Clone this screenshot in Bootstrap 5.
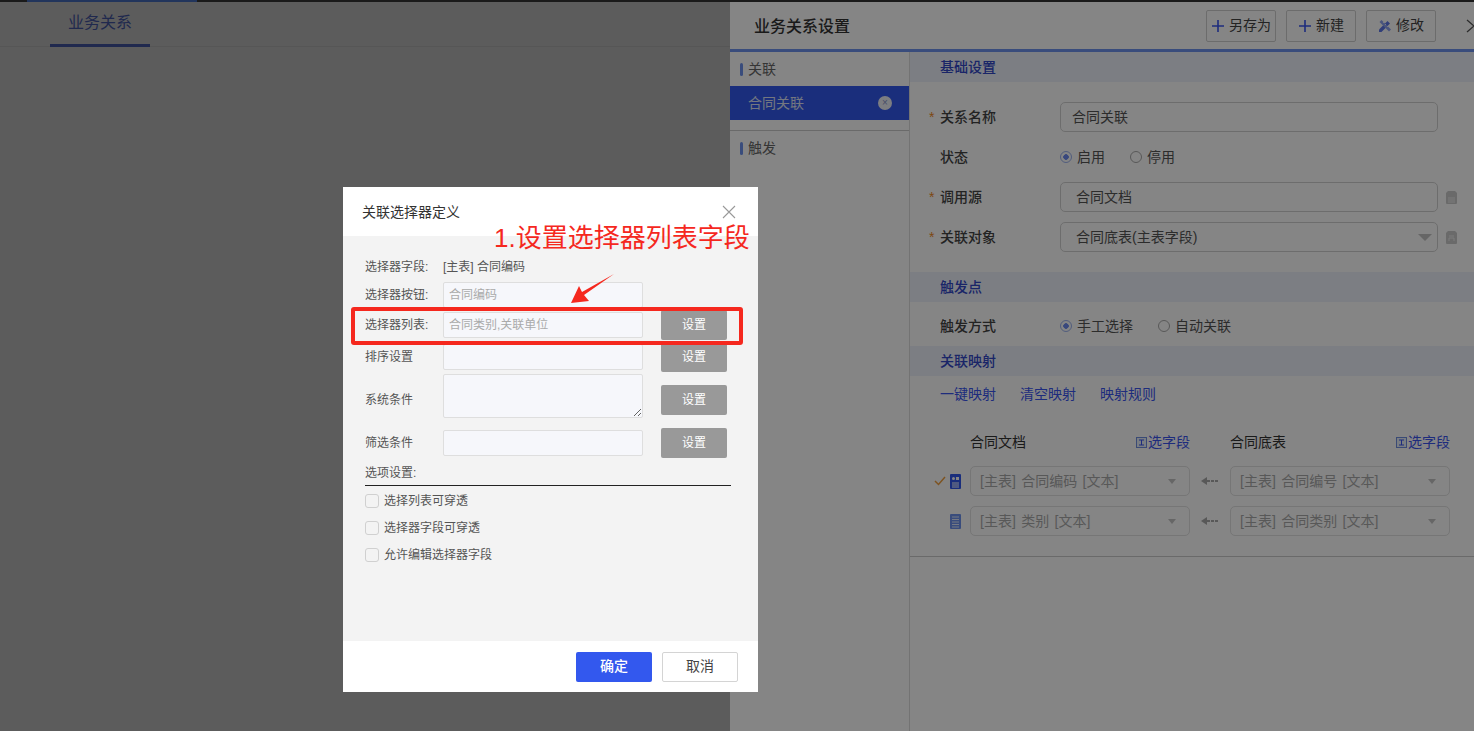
<!DOCTYPE html>
<html lang="zh-CN">
<head>
    <meta charset="UTF-8">
    <meta name="viewport" content="width=device-width, initial-scale=1.0">
    <title>业务关系设置</title>
    <link href="https://cdn.jsdelivr.net/npm/bootstrap@5.3.0/dist/css/bootstrap.min.css" rel="stylesheet">
    <style>
        html, body { height: 731px; overflow: hidden; }
        body { font-family: "Liberation Sans", "Noto Sans CJK SC", sans-serif; font-size: 14px; color: #333; background: #fff; }
        .page-wrap { display: flex; height: 731px; position: relative; }

        /* left */
        .left-side { width: 730px; flex: none; }
        .top-strip { height: 2px; background: #484848; }
        .top-strip span { display: block; margin-left: 27px; width: 170px; height: 2px; background: #5e93ff; }
        .biz-tabs { height: 45px; border-bottom: 1px solid #eee; padding-left: 50px; }
        .biz-tab { display: block; width: 100px; height: 45px; border-bottom: 3px solid #5a72d8; text-align: center; font-size: 16px; line-height: 42px; color: #5a72d8; }

        /* right panel */
        .right-side { width: 744px; flex: none; }
        .strip-right { height: 2px; background: #323232; }
        .panel-top { height: 47px; padding-left: 24px; }
        .panel-title { font-size: 16px; font-weight: 500; color: #333; padding-top: 3px; }
        .tool-btn { width: 70px; height: 32px; padding: 0; margin-right: 10px; font-size: 14px; color: #444; border: 1px solid #d0d0d0; border-radius: 2px; background: #fff; }
        .close-x { width: 18px; margin-left: 20px; }
        .panel-body { display: flex; border-top: 3px solid #6d93ee; height: 682px; }
        .side-list { width: 180px; flex: none; border-right: 1px solid #ddd; }
        .side-head { height: 34px; padding-left: 10px; color: #666; }
        .side-head i { display: block; width: 3px; height: 13px; margin-right: 5px; background: #6d93ee; border-radius: 2px; }
        .side-active { height: 34px; padding: 0 17px 0 18px; background: #3358ee; color: #dfe4f5; }
        .side-close { width: 14px; height: 14px; border-radius: 50%; background: #eef0f8; color: #8a95c8; font-size: 10px; line-height: 13px; text-align: center; }
        .side-line { border-top: 1px solid #ccc; margin-top: 10px; }

        .main-form { flex: 1; }
        .sec-head { height: 30px; line-height: 30px; padding-left: 30px; background: #edf2fb; color: #3348c8; font-weight: 500; }
        .form-line { display: flex; align-items: center; height: 30px; padding-left: 19px; font-weight: 500; }
        .star { width: 11px; color: #f08a24; }
        .form-name { width: 120px; color: #444; }
        .plain-box { height: 30px; padding: 0 11px; line-height: 28px; color: #555; border: 1px solid #d2d2d2; border-radius: 5px; background: #fff; font-weight: 400; }
        .w-long { width: 378px; }
        .pad-more { padding-left: 15px; padding-right: 5px; }
        .side-doc { margin-left: 8px; }
        .radio-item { display: flex; align-items: center; margin-right: 25px; font-weight: 400; color: #555; }
        .radio-item .form-check-input { width: 12px; height: 12px; margin: 0 5px 0 0; border: 1px solid #aaa; background: #fff; }
        .radio-item .form-check-input:checked { border-color: #9db3f0; background-color: #fff; background-image: radial-gradient(circle, #6d8bf0 0 2.5px, transparent 3px); }
        .tri { width: 0; height: 0; border-left: 4px solid transparent; border-right: 4px solid transparent; border-top: 5px solid #c4c4c4; }
        .tri-big { border-left-width: 7px; border-right-width: 7px; border-top-width: 7px; }
        .map-links { padding-left: 30px; line-height: 20px; }
        .map-links a { color: #3a55f0; text-decoration: none; margin-right: 24px; }
        .map-head { display: flex; height: 20px; line-height: 20px; padding-left: 60px; }
        .map-col { width: 220px; display: flex; justify-content: space-between; }
        .map-col a { color: #3a55f0; text-decoration: none; display: flex; align-items: center; gap: 1px; }
        .map-gap { width: 40px; display: flex; align-items: center; justify-content: center; }
        .map-row { display: flex; height: 30px; padding-left: 24px; align-items: center; }
        .map-check { width: 14px; }
        .map-doc { width: 15px; margin-right: 7px; }
        .doc-strong { color: #3358ee; }
        .doc-light { color: #6d93ee; }
        .map-select { width: 220px; height: 30px; padding: 0 13px 0 9px; border: 1px solid #e2e2e2; border-radius: 5px; color: #aaa; background: #fff; word-spacing: 1.5px; }
        .map-end { border-top: 1px solid #ccc; margin-top: 20px; }
        .first-line { margin-top: 20px; }
        .gap-line { margin-top: 10px; }
        .sec-two { margin-top: 20px; }
        .trig-line { margin-top: 9px; }
        .sec-three { margin-top: 5px; }
        .links-gap { margin-top: 8px; }
        .head-gap { margin-top: 28px; }
        .row-one { margin-top: 14px; }
        .row-two { margin-top: 10px; }

        /* masks */
        .mask-left, .mask-right { position: absolute; top: 0; height: 731px; }
        .mask-left { left: 0; width: 730px; background: rgba(0, 0, 0, .64); }
        .mask-right { left: 730px; width: 744px; background: rgba(0, 0, 0, .48); }

        /* dialog */
        .sel-dialog { position: absolute; left: 343px; top: 187px; width: 415px; height: 505px; background: #f3f3f3; display: flex; flex-direction: column; }
        .dlg-top { height: 49px; padding: 0 22px 0 19px; background: #fff; }
        .dlg-title { color: #333; font-size: 14px; padding-top: 1px; }
        .dlg-body { flex: 1; padding: 0 27px 0 22px; font-size: 12px; color: #555; }
        .dlg-line { display: flex; align-items: center; }
        .dlg-name { width: 78px; flex: none; }
        .dlg-input { width: 200px; height: 26px; flex: none; padding: 0 5px; line-height: 24px; font-size: 12px; color: #aaa; background: #f6f7fb; border: 1px solid #dedede; border-radius: 2px; }
        .dlg-area { width: 200px; height: 44px; flex: none; align-self: flex-start; padding: 0 5px; background: #f6f7fb; border: 1px solid #dedede; border-radius: 2px; }
        .dlg-btn { width: 66px; height: 30px; margin-left: 18px; padding: 0; border: 0; border-radius: 2px; background: #999; color: #fff; font-size: 12px; }
        .opt-title { line-height: 16px; border-bottom: 1px solid #222; height: 21px; }
        .opt-line { display: flex; align-items: center; height: 27px; }
        .opt-line .form-check-input { width: 14px; height: 14px; margin: 0 5px 0 0; border: 1px solid #d0d0d0; border-radius: 3px; background: #f3f3f3; }
        .line-a { height: 16px; margin-top: 23px; }
        .line-b { margin-top: 7px; }
        .line-c { margin-top: 2px; }
        .line-d { margin-top: 2px; }
        .line-e { margin-top: 2px; height: 52px; }
        .line-f { margin-top: 2px; }
        .line-g { margin-top: 7px; }
        .opt-first { margin-top: 1px; }
        .dlg-foot { height: 51px; padding-right: 20px; background: #fff; }
        .btn-sure { width: 76px; height: 30px; padding: 0; border: 0; border-radius: 2px; background: #3358ee; color: #fff; font-size: 14px; font-weight: 500; }
        .btn-cancel { width: 76px; height: 30px; padding: 0; margin-left: 10px; border: 1px solid #d4d4d4; border-radius: 2px; background: #fff; color: #444; font-size: 14px; }

        /* screenshot notes */
        .note-text { position: absolute; left: 494px; top: 219px; font-size: 26px; line-height: 38px; color: #f5281e; white-space: nowrap; }
        .note-box { position: absolute; left: 351px; top: 307px; width: 392px; height: 38px; border: 4px solid #f5281e; border-radius: 3px; }
        .note-arrow { position: absolute; left: 568px; top: 272px; }
    </style>
</head>
<body>
    <svg width="0" height="0" class="d-none">
        <symbol id="ico-plus" viewBox="0 0 14 14"><path d="M7 1v12M1 7h12" stroke="#3a55f0" stroke-width="1.6" fill="none"/></symbol>
        <symbol id="ico-tool" viewBox="0 0 14 14"><path d="M1 10.500L9.500 2l2.500 2.500L3.500 13H1z" fill="#5f78e8"/><path d="M3.500 1L13 10.500 11 12.500 1.500 3z" fill="#8fa3f0"/><path d="M5 4l1-1M7 6l1-1M9 8l1-1" stroke="#fff" stroke-width=".8"/></symbol>
        <symbol id="ico-file" viewBox="0 0 11 13"><path d="M2 0h7l2 2v10a1 1 0 0 1-1 1H1a1 1 0 0 1-1-1V2z" fill="#ccc"/><path d="M2 7h7M2 9h7M2 11h7" stroke="#eee" stroke-width="1"/></symbol>
        <symbol id="ico-file-b" viewBox="0 0 11 13"><path d="M2 0h7l2 2v10a1 1 0 0 1-1 1H1a1 1 0 0 1-1-1V2z" fill="#ccc"/><path d="M3 10V7h5v3M3 5h5" stroke="#eee" stroke-width="1" fill="none"/></symbol>
        <symbol id="ico-doc" viewBox="0 0 11 15"><rect width="11" height="15" rx="1" fill="currentColor"/><path d="M2 9h7M2 11h7M2 13h7" stroke="#fff" stroke-width="1"/><circle cx="3.500" cy="4.500" r="1.500" fill="#fff"/><rect x="6" y="3" width="3" height="3" fill="#fff"/></symbol>
        <symbol id="ico-doc-b" viewBox="0 0 11 15"><rect width="11" height="15" rx="1" fill="currentColor"/><path d="M2 3h7M2 5.500h7M2 8h7M2 10.500h7M2 13h7" stroke="#fff" stroke-width="1" opacity=".8"/></symbol>
        <symbol id="ico-pick" viewBox="0 0 11 11"><rect x=".5" y=".5" width="10" height="10" fill="#e8f0fa" stroke="#6f8fe0"/><path d="M3 3h5M3 8h5M5.500 3v5" stroke="#3a55f0" stroke-width="1"/></symbol>
        <symbol id="ico-back" viewBox="0 0 18 10"><path d="M0 5l6-4v8z" fill="#aaa"/><path d="M6 5h12" stroke="#aaa" stroke-width="2" stroke-dasharray="3 1"/></symbol>
    </svg>

    <div class="page-wrap">
        <div class="left-side">
            <div class="top-strip"><span></span></div>
            <div class="biz-tabs"><span class="biz-tab">业务关系</span></div>
        </div>

        <div class="right-side">
            <div class="strip-right"></div>
            <div class="d-flex align-items-center panel-top">
                <div class="panel-title me-auto">业务关系设置</div>
                <button type="button" class="btn tool-btn"><svg width="14" height="14"><use href="#ico-plus"/></svg> 另存为</button>
                <button type="button" class="btn tool-btn"><svg width="14" height="14"><use href="#ico-plus"/></svg> 新建</button>
                <button type="button" class="btn tool-btn me-0"><svg width="14" height="14"><use href="#ico-tool"/></svg> 修改</button>
                <svg class="close-x" width="18" height="14" viewBox="0 0 18 14"><path d="M11 1l7 6-7 6" stroke="#555" stroke-width="1.3" fill="none"/></svg>
            </div>
            <div class="panel-body">
                <div class="side-list">
                    <div class="d-flex align-items-center side-head">
                        <i></i>关联
                    </div>
                    <div class="d-flex align-items-center justify-content-between side-active">
                        <span>合同关联</span>
                        <span class="side-close">×</span>
                    </div>
                    <div class="side-line"></div>
                    <div class="d-flex align-items-center side-head"><i></i>触发</div>
                </div>
                <div class="main-form">
                    <div class="sec-head">基础设置</div>

                    <div class="form-line first-line">
                        <span class="star">*</span><span class="form-name">关系名称</span>
                        <div class="plain-box w-long">合同关联</div>
                    </div>
                    <div class="form-line gap-line">
                        <span class="star"></span><span class="form-name">状态</span>
                        <label class="radio-item"><input class="form-check-input" type="radio" name="st" checked>启用</label>
                        <label class="radio-item"><input class="form-check-input" type="radio" name="st">停用</label>
                    </div>
                    <div class="form-line gap-line">
                        <span class="star">*</span><span class="form-name">调用源</span>
                        <div class="plain-box w-long pad-more">合同文档</div>
                        <svg class="side-doc" width="11" height="13"><use href="#ico-file"/></svg>
                    </div>
                    <div class="form-line gap-line">
                        <span class="star">*</span><span class="form-name">关联对象</span>
                        <div class="plain-box w-long pad-more d-flex align-items-center justify-content-between">合同底表(主表字段)<span class="tri tri-big"></span></div>
                        <svg class="side-doc" width="11" height="13"><use href="#ico-file-b"/></svg>
                    </div>

                    <div class="sec-head sec-two">触发点</div>
                    <div class="form-line trig-line">
                        <span class="star"></span><span class="form-name">触发方式</span>
                        <label class="radio-item"><input class="form-check-input" type="radio" name="tr" checked>手工选择</label>
                        <label class="radio-item"><input class="form-check-input" type="radio" name="tr">自动关联</label>
                    </div>

                    <div class="sec-head sec-three">关联映射</div>
                    <div class="map-links links-gap">
                        <a href="#">一键映射</a><a href="#">清空映射</a><a href="#">映射规则</a>
                    </div>
                    <div class="map-head head-gap">
                        <div class="map-col"><span>合同文档</span><a href="#"><svg width="11" height="11"><use href="#ico-pick"/></svg>选字段</a></div>
                        <div class="map-gap"></div>
                        <div class="map-col"><span>合同底表</span><a href="#"><svg width="11" height="11"><use href="#ico-pick"/></svg>选字段</a></div>
                    </div>
                    <div class="map-row row-one">
                        <svg class="map-check" width="14" height="10" viewBox="0 0 14 10"><path d="M1 5l3.500 3.500L11 1" stroke="#f0a040" stroke-width="1.500" fill="none"/></svg>
                        <svg class="map-doc doc-strong" width="11" height="15"><use href="#ico-doc"/></svg>
                        <div class="map-select d-flex align-items-center justify-content-between">[主表] 合同编码 [文本]<span class="tri"></span></div>
                        <div class="map-gap"><svg width="18" height="10"><use href="#ico-back"/></svg></div>
                        <div class="map-select d-flex align-items-center justify-content-between">[主表] 合同编号 [文本]<span class="tri"></span></div>
                    </div>
                    <div class="map-row row-two">
                        <span class="map-check"></span>
                        <svg class="map-doc doc-light" width="11" height="15"><use href="#ico-doc-b"/></svg>
                        <div class="map-select d-flex align-items-center justify-content-between">[主表] 类别 [文本]<span class="tri"></span></div>
                        <div class="map-gap"><svg width="18" height="10"><use href="#ico-back"/></svg></div>
                        <div class="map-select d-flex align-items-center justify-content-between">[主表] 合同类别 [文本]<span class="tri"></span></div>
                    </div>
                    <div class="map-end"></div>
                </div>
            </div>
        </div>

        <div class="mask-left"></div>
        <div class="mask-right"></div>

        <div class="sel-dialog">
            <div class="d-flex align-items-center justify-content-between dlg-top">
                <span class="dlg-title">关联选择器定义</span>
                <svg width="14" height="14" viewBox="0 0 14 14"><path d="M1 1l12 12M13 1L1 13" stroke="#999" stroke-width="1.100"/></svg>
            </div>
            <div class="dlg-body">
                <div class="dlg-line line-a"><span class="dlg-name">选择器字段:</span><span>[主表] 合同编码</span></div>
                <div class="dlg-line line-b"><span class="dlg-name">选择器按钮:</span><div class="dlg-input">合同编码</div></div>
                <div class="dlg-line line-c"><span class="dlg-name">选择器列表:</span><div class="dlg-input">合同类别,关联单位</div><button type="button" class="btn dlg-btn">设置</button></div>
                <div class="dlg-line line-d"><span class="dlg-name">排序设置</span><div class="dlg-input"></div><button type="button" class="btn dlg-btn">设置</button></div>
                <div class="dlg-line line-e"><span class="dlg-name">系统条件</span><textarea class="dlg-area"></textarea><button type="button" class="btn dlg-btn">设置</button></div>
                <div class="dlg-line line-f"><span class="dlg-name">筛选条件</span><div class="dlg-input"></div><button type="button" class="btn dlg-btn">设置</button></div>
                <div class="opt-title line-g">选项设置:</div>
                <label class="opt-line opt-first"><input class="form-check-input" type="checkbox">选择列表可穿透</label>
                <label class="opt-line"><input class="form-check-input" type="checkbox">选择器字段可穿透</label>
                <label class="opt-line"><input class="form-check-input" type="checkbox">允许编辑选择器字段</label>
            </div>
            <div class="d-flex align-items-center justify-content-end dlg-foot">
                <button type="button" class="btn btn-sure">确定</button>
                <button type="button" class="btn btn-cancel">取消</button>
            </div>
        </div>

        <div class="note-text">1.设置选择器列表字段</div>
        <div class="note-box"></div>
        <svg class="note-arrow" width="48" height="34" viewBox="0 0 48 34"><path d="M46 2L16 23l5 6L3 31l8-17 3 6z" fill="#f5281e"/></svg>
    </div>
</body>
</html>
